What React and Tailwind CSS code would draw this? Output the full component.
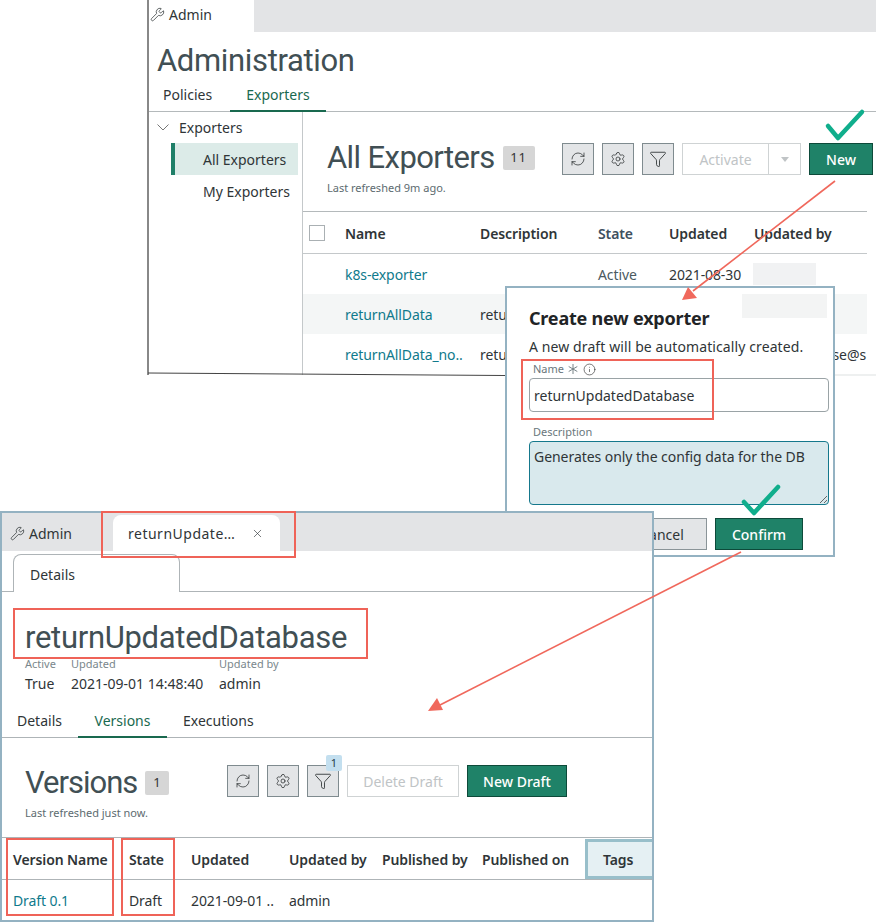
import React from "react";
import { RefreshCw, Settings, Funnel, Wrench, X, Info } from "lucide-react";

const FONT = "font-['Noto_Sans','Liberation_Sans',sans-serif]";
const TITLE = "font-['Roboto','Noto_Sans',sans-serif] text-[31px] text-[#414f54]";

function IconBtn({ children }) {
  return (
    <div className="relative w-8 h-8 border border-[#7f8b8f] bg-[#e3e5e7] flex items-center justify-center text-[#25292b]">
      {children}
    </div>
  );
}

function Toolbar3({ badge }) {
  return (
    <div className="flex gap-2">
      <IconBtn><RefreshCw size={16} strokeWidth={1.1} /></IconBtn>
      <IconBtn><Settings size={16} strokeWidth={1.1} /></IconBtn>
      <IconBtn>
        <Funnel size={18} strokeWidth={1.1} />
        {badge && (
          <span className="absolute -top-[11px] -right-[4px] w-4 h-4 rounded-[2px] bg-[#c3dfef] text-[11px] leading-4 text-center text-[#233a46]">1</span>
        )}
      </IconBtn>
    </div>
  );
}

function Badge({ children, w }) {
  return (
    <span className={`${w} h-6 rounded-[2px] bg-[#d6d6d6] text-[13px] tracking-[1px] text-[#333] flex items-center justify-center`}>{children}</span>
  );
}

function ExportersRow({ name, desc, state, updated, by, bg }) {
  return (
    <div className={`flex items-center h-10 text-[14px] tracking-[-0.1px] ${bg || ""}`}>
      <span className="w-[42px]" />
      <span className="w-[135px] whitespace-nowrap text-[#0f7a8c]">{name}</span>
      <span className="w-[118px] text-[#2f3537]">{desc}</span>
      <span className="w-[71px] text-[#4b5a5f]">{state}</span>
      <span className="w-[84px] text-[#2f3537] whitespace-nowrap">{updated}</span>
      <span className="ml-auto pr-[1px] text-[#2f3537]">{by}</span>
    </div>
  );
}

function AdminWindow() {
  return (
    <div className="absolute left-[147px] top-0 w-[729px] h-[375px] border-l-2 border-[#888] bg-white flex flex-col">
      <div className="h-8 bg-[#e3e4e6] flex shrink-0">
        <div className="w-[105px] bg-white flex items-center pl-[1px] pb-[3px] gap-[4px] text-[14px] text-[#2f3537]">
          <Wrench size={15} strokeWidth={1.2} />
          Admin
        </div>
      </div>
      <h1 className={`${TITLE} tracking-[-0.35px] leading-10 mt-[9px] pl-2`}>Administration</h1>
      <div className="flex h-[31px] border-b border-[#b4b9bb] text-[14px] shrink-0">
        <div className="pl-[14px] w-[81px] pt-[3px] text-[#2f3537]">Policies</div>
        <div className="w-24 -mb-px border-b-2 border-[#19694f] text-center pt-[3px] text-[#19694f]">Exporters</div>
      </div>
      <div className="flex flex-1 min-h-0">
        <aside className="w-[154px] border-r border-[#c4c8ca] shrink-0 text-[14px] text-[#2f3537]">
          <div className="h-[31px] flex items-center pl-2 pb-[1px] gap-[10px]">
            <svg width="12" height="7" viewBox="0 0 12 7" fill="none" stroke="#666" strokeWidth="0.9"><path d="M0.5 0.5 6 6 11.5 0.5" /></svg>
            Exporters
          </div>
          <div className="ml-[22px] w-[127px] h-8 border-l-4 border-[#1f7f68] bg-[#dcebe8] flex items-center pl-7">All Exporters</div>
          <div className="ml-[22px] h-8 flex items-center pl-[32px]">My Exporters</div>
        </aside>
        <main className="flex-1 min-w-0 flex flex-col">
          <div className="h-[100px] shrink-0 pl-[24px] pt-[26px] pr-[3px] relative border-b border-[#b4b9bb] mr-[9px]">
            <div className="flex items-start">
              <div>
                <div className="flex items-center gap-2">
                  <span className={`${TITLE} tracking-[-0.6px] leading-[40px]`}>All Exporters</span>
                  <Badge w="w-8">11</Badge>
                </div>
                <div className="text-[11px] leading-4 mt-[2px] text-[#5d6b70]">Last refreshed 9m ago.</div>
              </div>
              <div className="absolute left-[259px] top-[31px] flex gap-2">
                <Toolbar3 />
                <div className="flex w-[119px] h-8 border border-[#cfd3d4] text-[14px] text-[#c0c4c6]">
                  <span className="w-[86px] border-r border-[#cfd3d4] flex items-center justify-center">Activate</span>
                  <span className="flex-1 flex items-center justify-center">
                    <span className="w-0 h-0 border-x-[4px] border-x-transparent border-t-[5px] border-t-[#c0c4c6]" />
                  </span>
                </div>
                <div className="w-16 h-8 bg-[#1f8268] border border-[#0d4a3a] text-[14px] font-medium text-white flex items-center justify-center">New</div>
              </div>
            </div>
          </div>
          <div className="mr-[9px] flex items-center h-[42px] shrink-0 border-b border-[#c4c8ca] text-[14px] font-semibold tracking-[-0.1px] text-[#2f3537]">
            <span className="w-[42px] pl-[6px]"><span className="block w-4 h-4 border border-[#aab0b3]" /></span>
            <span className="w-[135px] pt-[2px]">Name</span>
            <span className="w-[118px] pt-[2px]">Description</span>
            <span className="w-[71px] pt-[2px] text-[#3e5060]">State</span>
            <span className="w-[85px] pt-[2px]">Updated</span>
            <span className="pt-[2px]">Updated by</span>
          </div>
          <div className="mr-[9px]">
            <ExportersRow name="k8s-exporter" state="Active" updated="2021-08-30" />
            <ExportersRow name="returnAllData" desc="retu" bg="bg-[#f4f6f6]" />
            <ExportersRow name="returnAllData_no.." desc="retu" by="se@s" />
          </div>
        </main>
      </div>
    </div>
  );
}

function CreateDialog() {
  return (
    <div className="absolute left-[505px] top-[286px] w-[330px] h-[271px] border-2 border-[#94b2c2] bg-white pl-[22px] pr-[4px] pt-[18px] text-[#2f3537]">
      <h2 className="text-[18px] leading-6 font-bold tracking-[-0.2px] text-[#1f2426]">Create new exporter</h2>
      <p className="text-[14px] leading-5 mt-[7px] tracking-[0.1px]">A new draft will be automatically created.</p>
      <div className="mt-[4px] h-[16px] pl-[4px] flex items-center gap-[4px] text-[11px] text-[#6a777c]">
        Name
        <svg width="10" height="10" viewBox="0 0 10 10" fill="none" stroke="#6a777c" strokeWidth="0.9"><path d="M5 0V10M0.7 2.5 9.3 7.5M0.7 7.5 9.3 2.5" /></svg>
        <Info size={13} strokeWidth={1.2} className="text-[#333] ml-[1px]" />
      </div>
      <div className="mt-[1px] h-[34px] w-[300px] border border-[#9aa3a6] rounded-[4px] pl-1 flex items-center text-[14px]">returnUpdatedDatabase</div>
      <div className="mt-[12px] h-[16px] pl-[4px] text-[11px] leading-4 text-[#6a777c]">Description</div>
      <div className="relative mt-[1px] h-[64px] w-[300px] border border-[#15788c] rounded-[4px] bg-[#d9e9ed] pl-1 pt-[5px] text-[14px] leading-5 tracking-[-0.05px]">
        Generates only the config data for the DB
        <svg className="absolute right-0 bottom-0" width="9" height="9" viewBox="0 0 9 9" stroke="#444" strokeWidth="0.8">
          <path d="M1 8 8 1M5 8 8 5" />
        </svg>
      </div>
      <div className="mt-[13px] flex justify-end gap-2 pr-[26px]">
        <div className="w-[90px] h-8 border border-[#8a9498] bg-[#e3e5e7] flex items-center justify-center text-[14px]">Cancel</div>
        <div className="w-[88px] h-8 border border-[#0d4a3a] bg-[#1f8268] text-white text-[14px] font-medium flex items-center justify-center">Confirm</div>
      </div>
    </div>
  );
}

function DetailWindow() {
  return (
    <div className="absolute left-0 top-[511px] w-[654px] h-[411px] border-2 border-[#94b2c2] bg-white text-[#2f3537] overflow-hidden flex flex-col">
      <div className="h-[38px] bg-[#e3e4e6] flex shrink-0 text-[14px]">
        <div className="w-[111px] flex items-center pl-[8px] gap-[4px] pt-[2px]">
          <Wrench size={15} strokeWidth={1.2} />
          Admin
        </div>
        <div className="mt-[2px] w-[167px] rounded-t-[8px] bg-white flex items-center pl-[15px] gap-[16px]">
          <span className="tracking-[0.5px]">returnUpdate…</span>
          <X size={13} strokeWidth={1.2} />
        </div>
      </div>
      <div className="h-[41px] border-b border-[#aeb4b7] pl-[11px] pt-[3px] shrink-0">
        <div className="w-[167px] h-[38px] border border-b-0 border-[#aeb4b7] rounded-t-[8px] bg-white pl-[16px] pt-[9px] text-[14px]">Details</div>
      </div>
      <h1 className={`${TITLE} tracking-[-0.3px] leading-10 mt-[26px] -mb-[2px] pl-[23px]`}>returnUpdatedDatabase</h1>
      <div className="flex pl-[23px]">
        <div className="w-[46px]"><div className="text-[11px] leading-4 text-[#7a878c]">Active</div><div className="text-[14px] leading-6">True</div></div>
        <div className="w-[148px]"><div className="text-[11px] leading-4 text-[#7a878c]">Updated</div><div className="text-[14px] leading-6 whitespace-nowrap">2021-09-01 14:48:40</div></div>
        <div><div className="text-[11px] leading-4 text-[#7a878c]">Updated by</div><div className="text-[14px] leading-6">admin</div></div>
      </div>
      <div className="flex h-[33px] mt-[9px] border-b border-[#aeb4b7] shrink-0 text-[14px]">
        <div className="pl-[15px] w-[76px] pt-[5px]">Details</div>
        <div className="w-[89px] -mb-px border-b-2 border-[#19694f] text-center pt-[5px] text-[#19694f]">Versions</div>
        <div className="pl-[16px] pt-[5px]">Executions</div>
      </div>
      <div className="h-[100px] relative pl-[23px] pt-[25px] border-b border-[#aeb4b7] shrink-0">
        <div className="flex items-center gap-2">
          <span className={`${TITLE} tracking-[-1px] leading-[40px]`}>Versions</span>
          <Badge w="w-6">1</Badge>
        </div>
        <div className="text-[11px] leading-4 mt-[2px] text-[#5d6b70]">Last refreshed just now.</div>
        <div className="absolute left-[225px] top-[27px] flex gap-2">
          <Toolbar3 badge />
          <div className="w-[112px] h-8 border border-[#cfd3d4] text-[14px] text-[#c0c4c6] flex items-center justify-center">Delete Draft</div>
          <div className="w-[100px] h-8 bg-[#1f8268] border border-[#0d4a3a] text-[14px] font-medium text-white flex items-center justify-center">New Draft</div>
        </div>
      </div>
      <div className="flex items-center h-[42px] pt-[2px] border-b border-[#aeb4b7] text-[14px] font-semibold tracking-[-0.1px] shrink-0 relative">
        <span className="w-[127px] pl-[11px]">Version Name</span>
        <span className="w-[62px]">State</span>
        <span className="w-[98px]">Updated</span>
        <span className="w-[93px]">Updated by</span>
        <span className="w-[100px]">Published by</span>
        <span>Published on</span>
        <span className="absolute right-0 top-[1px] bottom-0 w-[67px] border-[3px] border-r-0 border-[#98bfca] bg-[#e5f0f3] flex items-center pl-[15px]">Tags</span>
      </div>
      <div className="flex items-center h-[42px] text-[14px] tracking-[-0.1px]">
        <span className="w-[127px] pl-[11px] text-[#0f7a8c]">Draft 0.1</span>
        <span className="w-[62px]">Draft</span>
        <span className="w-[98px] whitespace-nowrap">2021-09-01 ..</span>
        <span>admin</span>
      </div>
    </div>
  );
}

function RedBox({ cls }) {
  return <div className={`absolute border-2 border-[#ef6358] pointer-events-none ${cls}`} />;
}

export default function App() {
  return (
    <div className={`relative w-[876px] h-[922px] overflow-hidden bg-white ${FONT}`}>
      <AdminWindow />
      <div className="absolute left-[753px] top-[263px] w-[63px] h-[22px] bg-[#f1f2f3]" />
      <div className="absolute left-[835px] top-[374px] w-[41px] h-[2px] bg-[#eef0f0]" />
      <CreateDialog />
      <div className="absolute left-[742px] top-[294px] w-[85px] h-[24px] bg-[#f3f4f4]" />
      <DetailWindow />
      <RedBox cls="left-[521px] top-[359px] w-[193px] h-[61px]" />
      <RedBox cls="left-[101px] top-[511px] w-[195px] h-[47px]" />
      <RedBox cls="left-[13px] top-[608px] w-[355px] h-[51px]" />
      <RedBox cls="left-[6px] top-[838px] w-[108px] h-[78px]" />
      <RedBox cls="left-[121px] top-[838px] w-[54px] h-[78px]" />
      <svg className="absolute inset-0 pointer-events-none" width="876" height="922" viewBox="0 0 876 922" fill="none">
        <path d="M148 373 505 375.5" stroke="#444" strokeWidth="1.2" />
        <path d="M835 181 693 291" stroke="#f0685c" strokeWidth="1.6" />
        <path d="M682 300 688 287 697 298Z" fill="#f0685c" />
        <path d="M741 552 440 705" stroke="#f0685c" strokeWidth="1.6" />
        <path d="M428 711 437 698 443 710Z" fill="#f0685c" />
        <path d="M828 126 838 138 862 112" stroke="#10ae8c" strokeWidth="4.5" strokeLinecap="round" strokeLinejoin="round" />
        <path d="M744 502 754 513 778 487" stroke="#10ae8c" strokeWidth="4.5" strokeLinecap="round" strokeLinejoin="round" />
      </svg>
    </div>
  );
}
